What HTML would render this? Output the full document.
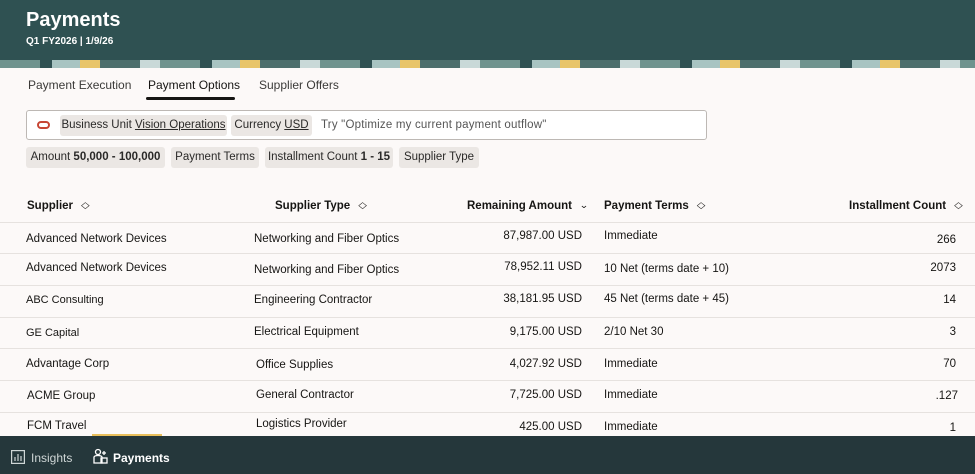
<!DOCTYPE html>
<html><head><style>
*{margin:0;padding:0;box-sizing:border-box}
body{width:975px;height:474px;overflow:hidden;background:#fcf9f8;font-family:"Liberation Sans",sans-serif;color:#161513;position:relative}
.hdr{position:absolute;left:0;top:0;width:975px;height:60px;background:#2f5152;color:#fff}
.hdr h1{position:absolute;left:26px;top:9px;font-size:20px;font-weight:bold}
.hdr .s{position:absolute;left:26px;top:36px;font-size:10px;font-weight:bold}
.band{position:absolute;left:0;top:60px;width:975px;height:8px;background:repeating-linear-gradient(90deg,#6f938e 0 40px,#2f5152 40px 52px,#a8c4c2 52px 80px,#e8c56a 80px 100px,#4c6e6c 100px 140px,#c9d9d8 140px 160px)}
.tab{position:absolute;top:78px;font-size:12px;color:#3b3a38}
.chip{position:absolute;height:21px;background:#ebe7e4;border-radius:3px;font-size:11.5px;line-height:21px;text-align:center;color:#2a2928;white-space:nowrap}
.sb{position:absolute;left:26px;top:110px;width:681px;height:30px;border:1px solid #bdb8b4;border-radius:3px;background:#fff}
.th{position:absolute;top:198px;font-size:11.5px;font-weight:bold}
.th span{display:inline-block;transform:scaleY(0.8);font-weight:normal;margin-left:8px}
.r{position:absolute;left:0;width:975px;border-top:1px solid #e6e2df}
.c{position:absolute;font-size:11.5px;white-space:nowrap}
.ft{position:absolute;left:0;top:436px;width:975px;height:38px;background:#25373b;color:#fff;font-size:12px}
</style></head><body>
<div class="hdr"><h1>Payments</h1><div class="s">Q1 FY2026 | 1/9/26</div></div>
<div class="band"></div>
<div class="tab" style="left:28px">Payment Execution</div>
<div class="tab" style="left:148px;color:#161513">Payment Options</div>
<div style="position:absolute;left:146px;top:97px;width:89px;height:3px;background:#161513;border-radius:2px"></div>
<div class="tab" style="left:259px">Supplier Offers</div>
<div class="sb"></div>
<div style="position:absolute;left:37px;top:121px;width:13px;height:8px;border:2px solid #c74634;border-radius:4px"></div>
<div class="chip" style="left:60px;top:115px;width:167px">Business Unit <u>Vision Operations</u></div>
<div class="chip" style="left:231px;top:115px;width:81px">Currency <u>USD</u></div>
<div style="position:absolute;left:321px;top:119px;font-size:11.5px;color:#555;letter-spacing:0.2px">Try "Optimize my current payment outflow"</div>
<div class="chip" style="left:26px;top:147px;width:139px">Amount <b>50,000 - 100,000</b></div>
<div class="chip" style="left:171px;top:147px;width:88px">Payment Terms</div>
<div class="chip" style="left:265px;top:147px;width:128px">Installment Count <b>1 - 15</b></div>
<div class="chip" style="left:399px;top:147px;width:80px">Supplier Type</div>
<div class="th" style="left:27px">Supplier<span>◇</span></div>
<div class="th" style="left:275px">Supplier Type<span>◇</span></div>
<div class="th" style="left:467px">Remaining Amount <span style="margin-left:4px">⌄</span></div>
<div class="th" style="left:604px">Payment Terms<span>◇</span></div>
<div class="th" style="left:849px">Installment Count<span>◇</span></div>
<div class="r" style="top:222px"></div>
<div class="r" style="top:253px"></div>
<div class="r" style="top:285px"></div>
<div class="r" style="top:317px"></div>
<div class="r" style="top:348px"></div>
<div class="r" style="top:380px"></div>
<div class="r" style="top:412px"></div>
<div class="c" style="left:26px;top:233px">Advanced Network Devices</div><div class="c" style="left:254px;top:233px">Networking and Fiber Optics</div><div class="c" style="right:393px;top:230px">87,987.00 USD</div><div class="c" style="left:604px;top:230px">Immediate</div><div class="c" style="right:19px;top:234px">266</div>
<div class="c" style="left:26px;top:262px">Advanced Network Devices</div><div class="c" style="left:254px;top:264px">Networking and Fiber Optics</div><div class="c" style="right:393px;top:261px">78,952.11 USD</div><div class="c" style="left:604px;top:263px">10 Net (terms date + 10)</div><div class="c" style="right:19px;top:262px">2073</div>
<div class="c" style="left:26px;top:294px;font-size:11px">ABC Consulting</div><div class="c" style="left:254px;top:294px">Engineering Contractor</div><div class="c" style="right:393px;top:293px">38,181.95 USD</div><div class="c" style="left:604px;top:293px">45 Net (terms date + 45)</div><div class="c" style="right:19px;top:294px">14</div>
<div class="c" style="left:26px;top:327px;font-size:11px">GE Capital</div><div class="c" style="left:254px;top:326px">Electrical Equipment</div><div class="c" style="right:393px;top:326px">9,175.00 USD</div><div class="c" style="left:604px;top:326px">2/10 Net 30</div><div class="c" style="right:19px;top:326px">3</div>
<div class="c" style="left:26px;top:358px">Advantage Corp</div><div class="c" style="left:256px;top:359px">Office Supplies</div><div class="c" style="right:393px;top:358px">4,027.92 USD</div><div class="c" style="left:604px;top:358px">Immediate</div><div class="c" style="right:19px;top:358px">70</div>
<div class="c" style="left:27px;top:390px">ACME Group</div><div class="c" style="left:256px;top:389px">General Contractor</div><div class="c" style="right:393px;top:389px">7,725.00 USD</div><div class="c" style="left:604px;top:389px">Immediate</div><div class="c" style="right:17px;top:390px">.127</div>
<div class="c" style="left:27px;top:420px">FCM Travel</div><div class="c" style="left:256px;top:418px">Logistics Provider</div><div class="c" style="right:393px;top:421px">425.00 USD</div><div class="c" style="left:604px;top:421px">Immediate</div><div class="c" style="right:19px;top:422px">1</div>
<div style="position:absolute;left:92px;top:434px;width:70px;height:3px;background:#e9bf5b"></div>
<div class="ft">
<svg style="position:absolute;left:11px;top:14px" width="14" height="14" viewBox="0 0 14 14" fill="none" stroke="#cfd6d6" stroke-width="1.2"><rect x="0.6" y="0.6" width="12.8" height="12.8"/><path d="M4 11V7M7 11V4M10 11V6"/></svg>
<div style="position:absolute;left:31px;top:15px;color:#cfd6d6">Insights</div>
<svg style="position:absolute;left:92px;top:12px" width="16" height="17" viewBox="0 0 16 17" fill="none" stroke="#fff" stroke-width="1.3"><circle cx="6" cy="4" r="2.5"/><path d="M2 9c1-2 7-2 8 0v6H2z"/><path d="M12 3v4M10 5h4"/><rect x="9" y="10" width="6" height="5"/></svg>
<div style="position:absolute;left:113px;top:15px;font-weight:bold">Payments</div>
</div>
</body></html>
